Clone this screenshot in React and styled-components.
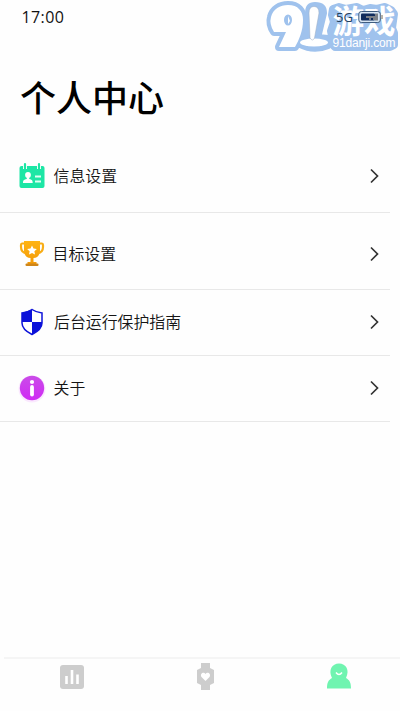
import React from 'react';
import styled, { createGlobalStyle } from 'styled-components';

const Global = createGlobalStyle`
  * { box-sizing: border-box; }
  body { margin: 0; background: #fefefe; color: #111; font-family: "Noto Sans", "Noto Sans CJK SC", sans-serif; }
`;
const Screen = styled.main`
  position: relative; width: 400px; height: 711px; overflow: hidden;
  display: flex; flex-direction: column; background: #fefefe;
`;
const StatusBar = styled.header`
  height: 34px; padding: 0 17px 0 21.5px; display: flex; align-items: center; justify-content: space-between;
  font: 16px/34px "Open Sans", "Noto Sans", sans-serif; letter-spacing: .4px; position: relative; z-index: 1;
`;
const Signal = styled.div`
  display: flex; align-items: center; gap: 5px; font-size: 13px; color: #24425f; height: 32px; letter-spacing: 0;
`;
const Title = styled.h1`
  margin: 0; height: 101px; padding: 35px 0 0 20px; font: 500 36px/54px "Noto Sans CJK SC", sans-serif; color: #000;
`;
const Menu = styled.nav`width: 390px;`;
const Row = styled.a`
  display: flex; height: ${p => p.$height}px; padding: ${p => p.$top}px 9px 0 18px;
  border-bottom: 1px solid #e8e8e8; align-items: flex-start;
`;
const IconSlot = styled.span`width: 28px; height: 30px; display: flex; align-items: center; justify-content: center;`;
const Label = styled.span`
  flex: 1; margin: 0 0 0 ${p => p.$gap}px; font: 350 15.9px/30px "Noto Sans CJK SC", sans-serif; color: #151515;
`;
const ArrowSlot = styled.span`height: 30px; display: flex; align-items: center;`;
const Spacer = styled.div`flex: 1;`;
const TabBar = styled.footer`
  margin-left: 4px; height: 54px; border-top: 2px solid #f5f5f5; display: grid; grid-template-columns: 135px 132px 135px;
  justify-items: center; padding-top: 4px;
`;
const Watermark = styled.div`position: absolute; left: 262px; top: 0; width: 138px; height: 58px;`;

const Contact = () => <svg width="28" height="28" viewBox="0 0 28 28">
  <rect x="1.5" y="4" width="25" height="22" rx="2" fill="#1de6a5" />
  <path d="M7 2v5M21 2v5" stroke="#fff" strokeWidth="4" /><path d="M7 2v4.500M21 2v4.500" stroke="#1de6a5" strokeWidth="2.200" strokeLinecap="round" />
  <circle cx="10" cy="13" r="2.900" fill="#fff" /><path d="M8.800 14h2.400v3c3 .7 3.500 1.600 3.500 4H5c0-2.400.7-3.300 3.800-4z" fill="#fff" />
  <path d="M17 14.500h6M17 19.500h6" stroke="#dffff4" strokeWidth="1.800" />
</svg>;
const Trophy = () => <svg width="28" height="30" viewBox="0 0 28 30">
  <defs><linearGradient id="gold" x2="0" y2="1"><stop stopColor="#ffb414" /><stop offset="1" stopColor="#f39a08" /></linearGradient></defs>
  <path d="M7 4.500H4Q3 4.500 3 6v2c0 4 2 6 6 6M21 4.500h3q1 0 1 1.500v2c0 4-2 6-6 6" fill="none" stroke="#f8ad16" strokeWidth="2.200" />
  <path d="M6 2h16v9c0 5-2.500 8-6.500 8v4h3v2h-9v-2h3v-4C8.500 19 6 16 6 11z" fill="url(#gold)" />
  <rect x="7.500" y="24.500" width="13" height="2.500" rx="1" fill="#cf8618" />
  <path d="m14 6.500 1.500 3 3.400.4-2.500 2.300.6 3.400-3-1.600-3 1.600.6-3.400-2.500-2.300 3.400-.4z" fill="#fff" />
</svg>;
const Shield = () => <svg width="28" height="30" viewBox="0 0 28 30">
  <path d="M14 2.500 24 6v10c0 5-4 8.500-10 11.500C8 24.500 4 21 4 16V6z" fill="#fff" />
  <path d="M14 2.500V15H4V6zM14 15h10v1c0 5-4 8.500-10 11.500z" fill="#0c12d9" />
  <path d="M14 2.500Q18.500 5.500 24 6v10c0 5-4 8.500-10 11.500C8 24.500 4 21 4 16V6q5.500-.5 10-3.500z" fill="none" stroke="#0c12d9" strokeWidth="1.500" />
</svg>;
const About = () => <svg width="28" height="30" viewBox="0 0 28 30" overflow="visible">
  <defs><linearGradient id="pink" x2="0" y2="1"><stop stopColor="#ca4ce8" /><stop offset="1" stopColor="#d02af5" /></linearGradient></defs>
  <circle cx="14" cy="16" r="13.500" fill="#e46bff" opacity=".15" /><circle cx="14" cy="15" r="12.200" fill="url(#pink)" />
  <circle cx="14" cy="9" r="2.100" fill="#fff" /><path d="M14 14v7.500" stroke="#fff" strokeWidth="3.800" strokeLinecap="round" />
</svg>;
const Arrow = () => <svg width="12" height="16" viewBox="0 0 12 16"><path d="m2 1.500 6.500 6.500L2 14.500" fill="none" stroke="#333" strokeWidth="1.700" /></svg>;
const Battery = () => <svg width="25" height="14" viewBox="0 0 25 14">
  <rect x=".8" y="1.500" width="21.500" height="11" rx="2.500" fill="#d9e7f4" stroke="#405d80" />
  <rect x="3" y="3.500" width="14" height="7" rx="1" fill="#102c5c" /><path d="M17 3.500h3v7h-3zM8 6h9v4h-2V8h-2v2h-2V8H8z" fill="#7c8188" />
  <path d="M24 5v4" stroke="#8a806f" strokeWidth="1.200" />
</svg>;
const items = [
  { label: '信息设置', Icon: Contact, height: 78, top: 26, gap: 7.5 },
  { label: '目标设置', Icon: Trophy, height: 77, top: 26, gap: 6.5 },
  { label: '后台运行保护指南', Icon: Shield, height: 66, top: 17, gap: 8 },
  { label: '关于', Icon: About, height: 66, top: 17, gap: 7.5 },
];
const Nine = () => <path d="M12 32Q7 24 9 17C11 9 18 5 26 5C36 5 41 11 41 20C41 31 37 40 33 47H17L24 32Z" />;
const Stem = () => <path d="M47 13Q47 6.500 52 6.500Q57 6.500 57 13L52.500 38Q50.500 42 48 38Z" />;
const Brand = () => <Watermark><svg width="138" height="58" viewBox="0 0 138 58">
  <g fill="#9fc2ed" stroke="#9fc2ed" strokeWidth="8" strokeLinejoin="round">
    <Nine /><path d="M47 13Q47 6 53 6Q61 6 61 13L55 38L66 39V45Q52 51 38 44V40L46 37Z" />
    <path d="M71 9 77 7 84 9 95 7 101 10 108 8 115 9 123 7 129 10 132 14 130 28 132 33V45L128 47H73L70 44V36L69 31 72 22 70 15Z" />
  </g>
  <g fill="#fff"><Nine /><ellipse cx="52" cy="42.500" rx="14" ry="4" /></g>
  <ellipse cx="26" cy="20" rx="4" ry="5.500" fill="#9fc2ed" /><path d="m26 16 2 5-2 3z" fill="#fff" />
  <g fill="#fff" stroke="#9aadc4" strokeWidth=".5"><Stem /></g>
  <text x="70.500" y="32.500" fontFamily='"Noto Sans CJK SC", sans-serif' fontWeight="700" fontSize="31.500" fill="#fff">游戏</text>
  <text x="70.500" y="46.500" fontFamily='"Liberation Sans", sans-serif' fontSize="12" fill="#fff" textLength="63">91danji.com</text>
</svg></Watermark>;

export default function App() {
  return <><Global /><Screen>
    <StatusBar><span>17:00</span><Signal>5G <Battery /></Signal></StatusBar>
    <Title>个人中心</Title>
    <Menu>{items.map(({ label, Icon, height, top, gap }) => <Row key={label} $height={height} $top={top}>
      <IconSlot><Icon /></IconSlot><Label $gap={gap}>{label}</Label><ArrowSlot><Arrow /></ArrowSlot>
    </Row>)}</Menu>
    <Spacer />
    <TabBar>
      <svg width="26" height="27" viewBox="0 -1 26 27"><rect x="1" y="1" width="24" height="24" rx="3" fill="#cdcdcd" /><path d="M7.500 12v8M13 6v14M18.500 10.500v9.500" stroke="#fff" strokeWidth="2.600" /></svg>
      <svg width="22" height="28" viewBox="-1 0 20 28"><path d="M5 0h9v5l4 2v13l-4 2v5H5v-5l-4-2V7l4-2z" fill="#cdcdcd" /><path d="M9.500 18 5.500 14c-2-3 2-6 4-3 2-3 6 0 4 3z" fill="#fff" /></svg>
      <svg width="26" height="27" viewBox="0 0 26 27"><path d="M1 25.500c0-6 1.500-8.500 5-10.500C2 7 6 .5 13 .5s11 6.500 7 14.500c3.500 2 5 4.500 5 10.500z" fill="#70f4b0" /><path d="M10 9.500q3 4 6 0" fill="none" stroke="#fff" strokeWidth="1.500" /></svg>
    </TabBar>
    <Brand />
  </Screen></>;
}
